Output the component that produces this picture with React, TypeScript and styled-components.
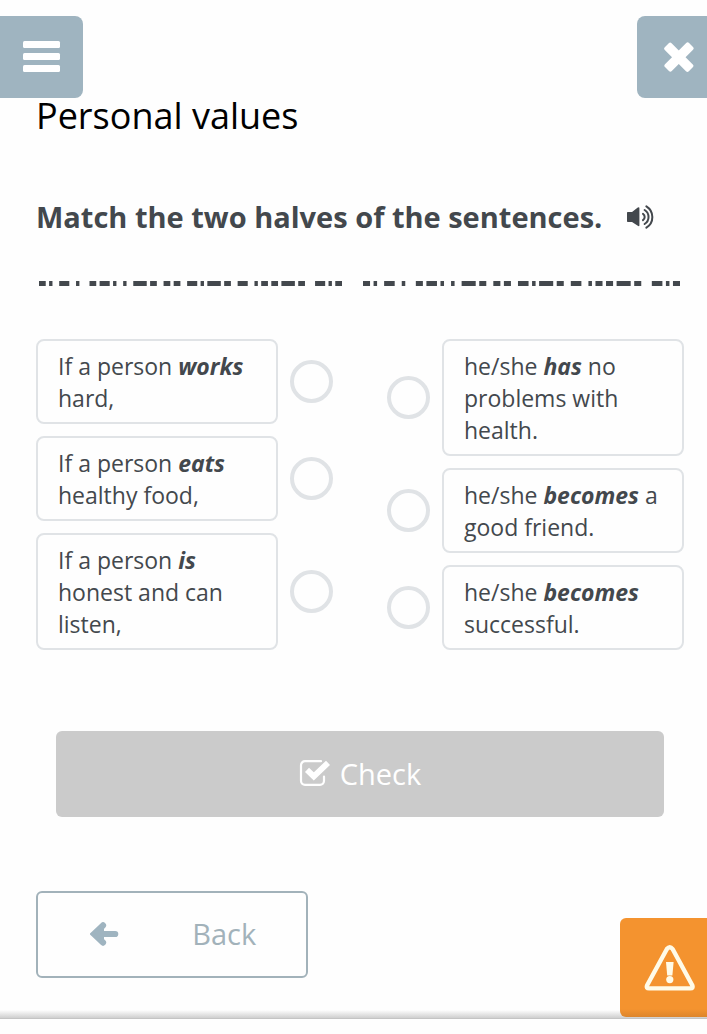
import React from 'react';
import styled, { createGlobalStyle } from 'styled-components';

const GlobalStyle = createGlobalStyle`
  *, *::before, *::after { box-sizing: border-box; }
  body {
    margin: 0;
    background: #fefefe;
    color: #43484d;
    font-family: 'Open Sans', 'Noto Sans', sans-serif;
  }
  button, input { font: inherit; margin: 0; }
  svg { display: block; }
`;

const Page = styled.div`
  position: relative;
  padding: 16px 0 40px;
  border-bottom: 1px solid #c4c4c4;
  background: linear-gradient(to top, #cfcfcf, #fefefe 8px);
`;

const TopBar = styled.header`
  display: flex;
  justify-content: space-between;
`;

const CornerButton = styled.button<{ $side: 'left' | 'right' }>`
  display: flex;
  align-items: center;
  width: ${({ $side }) => ($side === 'left' ? 83 : 70)}px;
  height: 82px;
  padding: 0 0 0 ${({ $side }) => ($side === 'left' ? 23 : 27)}px;
  border: 0;
  border-radius: ${({ $side }) => ($side === 'left' ? '0 8px 8px 0' : '8px 0 0 8px')};
  background: #9fb4c0;
  color: #fff;
`;

const Main = styled.main`
  padding: 0 23px 0 36px;
`;

const Title = styled.h1`
  margin: 0;
  color: #000;
  font-size: 36px;
  font-weight: 400;
  line-height: 36px;
`;

const Instruction = styled.h2`
  display: flex;
  align-items: center;
  gap: 25px;
  margin: 63px 0 0;
  font-size: 29px;
  font-weight: 700;
  line-height: 40px;
`;

const SoundButton = styled.button`
  padding: 0;
  border: 0;
  background: none;
  color: inherit;
`;

const Divider = styled.div`
  display: grid;
  grid-template-columns: 303fr 317fr;
  gap: 21px;
  margin: 44px 4px 0 3px;
`;

const Dashes = styled.svg`
  width: 100%;
  height: 5px;
  fill: #43484d;
`;

const Matching = styled.form`
  display: grid;
  grid-template-columns: 1fr 1fr;
  gap: 54px;
  margin-top: 53px;
`;

const Column = styled.div`
  display: flex;
  flex-direction: column;
  gap: 12px;
`;

const Option = styled.label<{ $reverse: boolean }>`
  display: flex;
  flex-direction: ${({ $reverse }) => ($reverse ? 'row-reverse' : 'row')};
  align-items: center;
  gap: 12px;
`;

const Card = styled.span`
  flex: 1;
  padding: 9px 20px 8px;
  border: 2px solid #e0e3e6;
  border-radius: 8px;
  font-size: 23px;
  line-height: 32px;
`;

const Keyword = styled.strong`
  font-style: italic;
  font-weight: 700;
`;

const Dot = styled.input`
  flex: none;
  appearance: none;
  width: 43px;
  height: 43px;
  border: 4px solid #e0e3e6;
  border-radius: 50%;
  &:checked { background: #9fb4c0; }
`;

const CheckButton = styled.button`
  display: flex;
  align-items: center;
  justify-content: center;
  gap: 10px;
  width: calc(100% - 40px);
  height: 86px;
  margin: 81px 20px 0;
  padding: 0 0 2px;
  border: 0;
  border-radius: 6px;
  background: #cbcbcb;
  color: #fff;
  font-size: 29px;
`;

const BackButton = styled.button`
  display: flex;
  align-items: center;
  justify-content: space-between;
  width: 42%;
  height: 87px;
  margin-top: 74px;
  padding: 0 50px 2px 52px;
  border: 2px solid #a2b2ba;
  border-radius: 6px;
  background: none;
  color: #a2b2ba;
  font-size: 29px;
`;

const ReportButton = styled.button`
  position: absolute;
  right: 0;
  bottom: 1px;
  display: flex;
  align-items: center;
  width: 87px;
  height: 99px;
  padding: 0 0 0 24px;
  border: 0;
  border-radius: 6px 0 0 6px;
  background: linear-gradient(to top, #dc852c, #f4932f 8px);
  color: #fffbe8;
`;

const MenuIcon = () => (
  <svg width="38" height="32" viewBox="0 0 38 32" fill="currentColor" aria-hidden="true">
    <rect y="0" width="37" height="7" rx="1.5" />
    <rect y="12" width="37" height="7" rx="1.5" />
    <rect y="24" width="37" height="7" rx="1.5" />
  </svg>
);

const CloseIcon = () => (
  <svg width="30" height="30" viewBox="0 0 30 30" fill="currentColor" aria-hidden="true">
    <g transform="rotate(45 15 15)">
      <rect x="-2" y="10.5" width="34" height="9.6" rx="2" />
      <rect x="10.2" y="-2" width="9.6" height="34" rx="2" />
    </g>
  </svg>
);

const SoundIcon = () => (
  <svg width="28" height="24" viewBox="0 0 28 24" fill="none" stroke="currentColor" strokeWidth="2" strokeLinecap="round" aria-hidden="true">
    <path d="M0 7.5 Q0 7 0.8 7 H5 L10.8 2.6 Q12.4 1.6 12.4 3.2 V20.2 Q12.4 21.8 10.8 20.8 L5 17 H0.8 Q0 17 0 16.2 Z" fill="currentColor" stroke="none" />
    <path d="M16 8.9 A3.7 3.7 0 0 1 16 15.1" />
    <path d="M17.6 5 A8.2 8.2 0 0 1 17.6 19" />
    <path d="M19.4 1.3 A12.6 12.6 0 0 1 19.4 22.7" />
  </svg>
);

const CheckIcon = () => (
  <svg width="31" height="28" viewBox="0 0 31 28" fill="none" stroke="currentColor" aria-hidden="true">
    <path d="M22 2.2 H6 A4 4 0 0 0 2 6.2 V21.8 A4 4 0 0 0 6 25.8 H21 A4 4 0 0 0 25 21.8 V17.5" strokeWidth="2.2" strokeLinecap="round" />
    <path d="M8 10.8 L14.8 17.4 L29 3.8" strokeWidth="5.8" />
  </svg>
);

const ArrowIcon = () => (
  <svg width="29" height="24" viewBox="0 0 29 24" fill="none" stroke="#9fb4c0" strokeWidth="6.2" strokeLinecap="round" aria-hidden="true">
    <path d="M6 12 H25.2" />
    <path d="M13 3.4 L4 12 L13 20.6" />
    <path d="M4 12 L14 4 V20 Z" fill="#9fb4c0" stroke="none" />
  </svg>
);

const WarningIcon = () => (
  <svg width="52" height="46" viewBox="0 0 52 46" fill="none" stroke="currentColor" aria-hidden="true">
    <path d="M22.9 4 Q25.8 0.4 28.6 4 L48.4 40.5 Q49.4 43.4 46.4 43.4 H5 Q2 43.4 3 40.5 Z" strokeWidth="4.4" strokeLinejoin="round" />
    <path d="M22 17 H29.6 L28.4 30.6 H23.2 Z" fill="currentColor" stroke="none" />
    <circle cx="25.8" cy="34.6" r="3.6" fill="currentColor" stroke="none" />
  </svg>
);

const DASHES = [
  [0, 2], [3, 1], [6, 3], [11, 1], [15, 2], [18, 3], [22, 1], [25, 1], [28, 4],
  [33, 2], [37, 2], [40, 2], [44, 3], [48, 1], [50, 4], [55, 2], [59, 3], [64, 1],
  [66, 2], [69, 2], [72, 4], [77, 2], [82, 3], [86, 1], [88, 2],
];

const DashLine = () => (
  <Dashes viewBox="0 0 90 5" preserveAspectRatio="none" aria-hidden="true">
    {DASHES.map(([x, width]) => (
      <rect key={x} x={x} width={width} height="5" />
    ))}
  </Dashes>
);

type Half = { before: string; keyword: string; after: string };

const beginnings: Half[] = [
  { before: 'If a person ', keyword: 'works', after: ' hard,' },
  { before: 'If a person ', keyword: 'eats', after: ' healthy food,' },
  { before: 'If a person ', keyword: 'is', after: ' honest and can listen,' },
];

const endings: Half[] = [
  { before: 'he/she ', keyword: 'has', after: ' no problems with health.' },
  { before: 'he/she ', keyword: 'becomes', after: ' a good friend.' },
  { before: 'he/she ', keyword: 'becomes', after: ' successful.' },
];

const HalfColumn = ({ name, items, reverse = false }: { name: string; items: Half[]; reverse?: boolean }) => (
  <Column>
    {items.map((item, i) => (
      <Option key={i} $reverse={reverse}>
        <Card>
          {item.before}
          <Keyword>{item.keyword}</Keyword>
          {item.after}
        </Card>
        <Dot type="radio" name={name} value={i} />
      </Option>
    ))}
  </Column>
);

export default function App() {
  return (
    <>
      <GlobalStyle />
      <Page>
        <TopBar>
          <CornerButton $side="left" aria-label="Menu"><MenuIcon /></CornerButton>
          <CornerButton $side="right" aria-label="Close"><CloseIcon /></CornerButton>
        </TopBar>
        <Main>
          <Title>Personal values</Title>
          <Instruction>
            Match the two halves of the sentences.
            <SoundButton aria-label="Listen"><SoundIcon /></SoundButton>
          </Instruction>
          <Divider>
            <DashLine />
            <DashLine />
          </Divider>
          <Matching>
            <HalfColumn name="beginning" items={beginnings} />
            <HalfColumn name="ending" items={endings} reverse />
          </Matching>
          <CheckButton><CheckIcon />Check</CheckButton>
          <BackButton><ArrowIcon />Back</BackButton>
        </Main>
        <ReportButton aria-label="Report a problem"><WarningIcon /></ReportButton>
      </Page>
    </>
  );
}
